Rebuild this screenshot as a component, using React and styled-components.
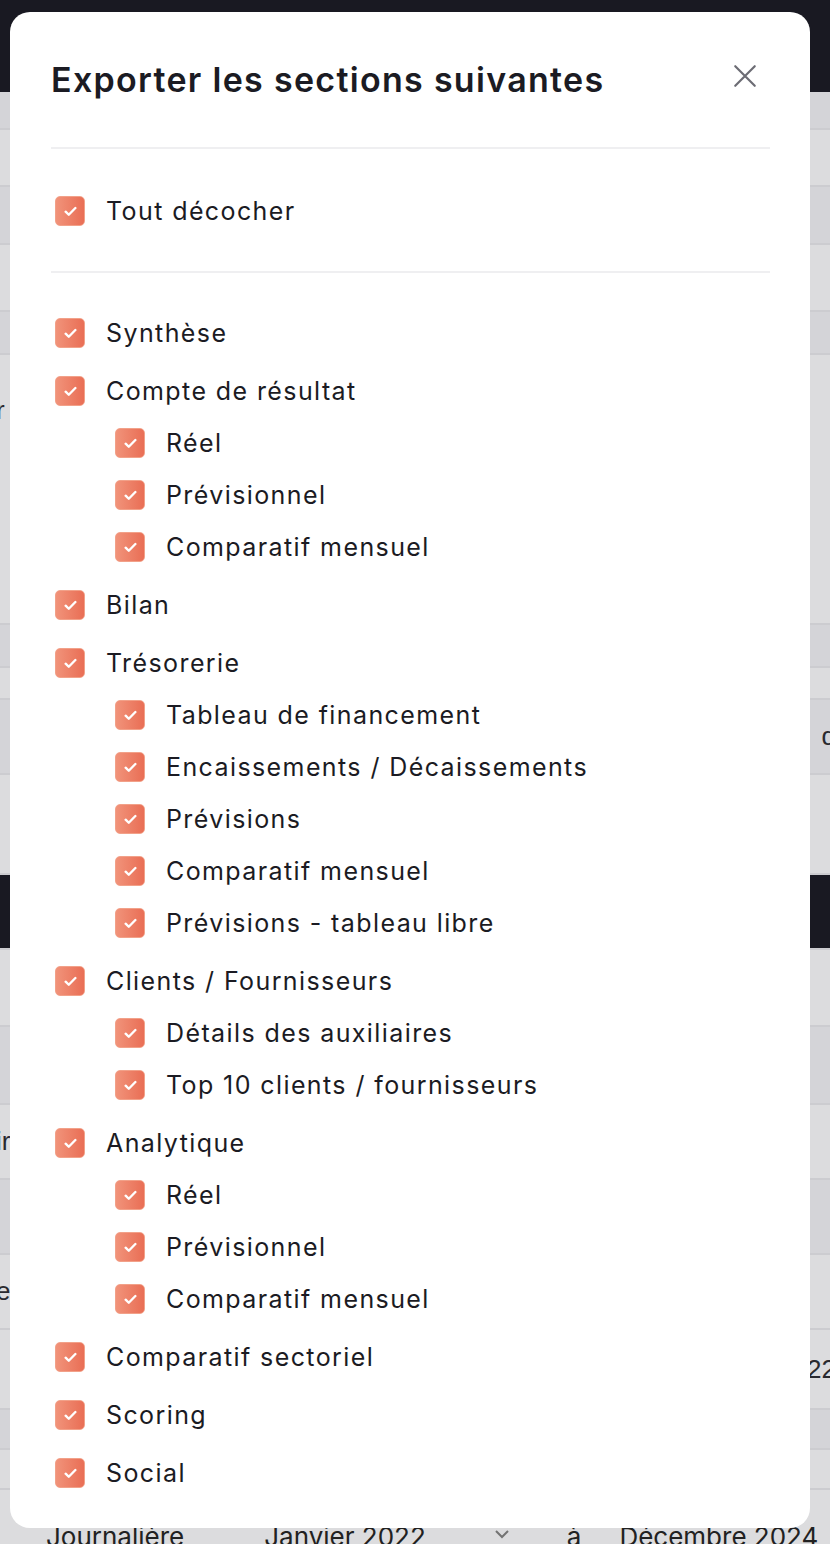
import React from "react";
import styled, { createGlobalStyle } from "styled-components";

const Global = createGlobalStyle`
  html, body { margin: 0; padding: 0; }
  body { font-family: "Inter", "Noto Sans", sans-serif; background: #e2e2e5; overflow: hidden; }
  #root { width: 830px; height: 1544px; position: relative; overflow: hidden; }
`;

const Page = styled.div`
  width: 830px;
  height: 1544px;
  display: flex;
  flex-direction: column;
  background: #e4e4e6;
`;

const TopBar = styled.div`
  height: 92px;
  flex: none;
  background: #1a1a23;
`;

const BgRow = styled.div`
  flex: none;
  box-sizing: border-box;
  height: ${(p) => p.$h}px;
  background: ${(p) => (p.$dark ? "#1a1a23" : p.$tint ? "#dcdce0" : "#e4e4e6")};
  border-bottom: 2px solid #d4d4d8;
  display: flex;
  justify-content: space-between;
  align-items: ${(p) => (p.$top ? "flex-start" : "center")};
  padding-top: ${(p) => p.$top || 0}px;
  font-family: "Liberation Sans", sans-serif;
  color: #222;
  font-size: 26px;
`;

const EdgeText = styled.span`
  margin-left: ${(p) => (p.$right ? "auto" : "-4px")};
  margin-right: ${(p) => (p.$right ? "-6px" : "0")};
  color: #2a2a30;
`;

const BottomBar = styled.div`
  flex: 1;
  display: flex;
  align-items: flex-end;
  padding-left: 46px;
  font-family: "Inter", sans-serif;
  font-size: 26px;
  color: #222;
  white-space: nowrap;
  line-height: 1;
  margin-bottom: -6px;
`;

const BottomField = styled.span`
  margin-left: ${(p) => p.$ml || 0}px;
  display: flex;
  align-items: center;
`;

const Chevron = styled.svg`
  margin-left: 68px;
  margin-bottom: 6px;
  color: #777;
`;

const Overlay = styled.div`
  position: absolute;
  inset: 0;
  background: rgba(20, 20, 30, 0.04);
`;

const Modal = styled.div`
  position: absolute;
  top: 12px;
  left: 10px;
  width: 800px;
  height: 1516px;
  background: #ffffff;
  border-radius: 20px;
  box-sizing: border-box;
  padding: 0 40px 0 41px;
  display: flex;
  flex-direction: column;
  color: #1b1b23;
`;

const Header = styled.div`
  height: 135px;
  display: flex;
  align-items: center;
  justify-content: space-between;
`;

const Title = styled.h2`
  margin: 0;
  font-size: 34px;
  font-weight: 600;
  letter-spacing: 1.3px;
  color: #1b1b23;
  white-space: nowrap;
`;

const CloseButton = styled.button`
  width: 40px;
  height: 40px;
  margin-right: 5px;
  margin-top: -8px;
  border: none;
  background: transparent;
  padding: 0;
  display: flex;
  align-items: center;
  justify-content: center;
  color: #6c6c74;
  cursor: pointer;
`;

const Divider = styled.div`
  height: 2px;
  background: #efeff1;
  flex: none;
`;

const ToggleAll = styled.div`
  height: 122px;
  display: flex;
  align-items: center;
  padding-top: 2px;
  box-sizing: border-box;
`;

const List = styled.div`
  padding-top: 34px;
  display: flex;
  flex-direction: column;
  gap: 6px;
`;

const Group = styled.div`
  display: flex;
  flex-direction: column;
`;

const Row = styled.label`
  height: 52px;
  display: flex;
  align-items: center;
  gap: 21px;
  padding-left: ${(p) => 4 + (p.$indent ? 60 : 0)}px;
  font-size: 25px;
  letter-spacing: 1.4px;
  font-weight: 400;
  color: #1b1b23;
  white-space: nowrap;
`;

const Box = styled.span`
  width: 30px;
  height: 30px;
  flex: none;
  box-sizing: border-box;
  border-radius: 5px;
  border: 1px solid #f2a189;
  background: linear-gradient(90deg, #f1937a 0%, #e96e55 100%);
  display: flex;
  align-items: center;
  justify-content: center;
`;

const Check = () => (
  <svg width="13" height="11" viewBox="0 0 12 10" fill="none">
    <path d="M1.5 5.2 L4.4 8 L10.5 1.8" stroke="#fff" strokeWidth="2.2" strokeLinecap="round" strokeLinejoin="round" />
  </svg>
);

const Item = ({ label, indent }) => (
  <Row $indent={indent}>
    <Box>
      <Check />
    </Box>
    {label}
  </Row>
);

const sections = [
  ["Synthèse"],
  ["Compte de résultat", ["Réel", "Prévisionnel", "Comparatif mensuel"]],
  ["Bilan"],
  [
    "Trésorerie",
    [
      "Tableau de financement",
      "Encaissements / Décaissements",
      "Prévisions",
      "Comparatif mensuel",
      "Prévisions - tableau libre",
    ],
  ],
  ["Clients / Fournisseurs", ["Détails des auxiliaires", "Top 10 clients / fournisseurs"]],
  ["Analytique", ["Réel", "Prévisionnel", "Comparatif mensuel"]],
  ["Comparatif sectoriel"],
  ["Scoring"],
  ["Social"],
];

const bgRows = [
  { h: 38, tint: true },
  { h: 57 },
  { h: 58, tint: true },
  { h: 67 },
  { h: 43, tint: true },
  { h: 270, l: "r", top: 40 },
  { h: 43, tint: true },
  { h: 32 },
  { h: 75, tint: true, r: "d" },
  { h: 100 },
  { h: 75, dark: true },
  { h: 77 },
  { h: 78, tint: true },
  { h: 75, l: "ir" },
  { h: 75, tint: true },
  { h: 75, l: "er" },
  { h: 80, r: "22" },
  { h: 40, tint: true },
  { h: 40 },
];

export default function App() {
  return (
    <>
      <Global />
      <Page>
        <TopBar />
        {bgRows.map((r, i) => (
          <BgRow key={i} $h={r.h} $tint={r.tint} $dark={r.dark} $top={r.top}>
            {r.l && <EdgeText>{r.l}</EdgeText>}
            {r.r && <EdgeText $right>{r.r}</EdgeText>}
          </BgRow>
        ))}
        <BottomBar>
          <BottomField>Journalière</BottomField>
          <BottomField $ml={80}>
            Janvier 2022
            <Chevron width="16" height="10" viewBox="0 0 16 10" fill="none" stroke="currentColor" strokeWidth="2">
              <path d="M2 2 L8 8 L14 2" />
            </Chevron>
          </BottomField>
          <BottomField $ml={57}>à</BottomField>
          <BottomField $ml={38}>Décembre 2024</BottomField>
        </BottomBar>
      </Page>
      <Overlay />
      <Modal>
        <Header>
          <Title>Exporter les sections suivantes</Title>
          <CloseButton aria-label="Fermer">
            <svg width="26" height="26" viewBox="0 0 24 24" fill="none" stroke="currentColor" strokeWidth="2" strokeLinecap="round">
              <path d="M3 3 L21 21 M21 3 L3 21" />
            </svg>
          </CloseButton>
        </Header>
        <Divider />
        <ToggleAll>
          <Item label="Tout décocher" />
        </ToggleAll>
        <Divider />
        <List>
          {sections.map(([label, children], i) => (
            <Group key={i}>
              <Item label={label} />
              {children && children.map((c) => <Item key={c} label={c} indent />)}
            </Group>
          ))}
        </List>
      </Modal>
    </>
  );
}
